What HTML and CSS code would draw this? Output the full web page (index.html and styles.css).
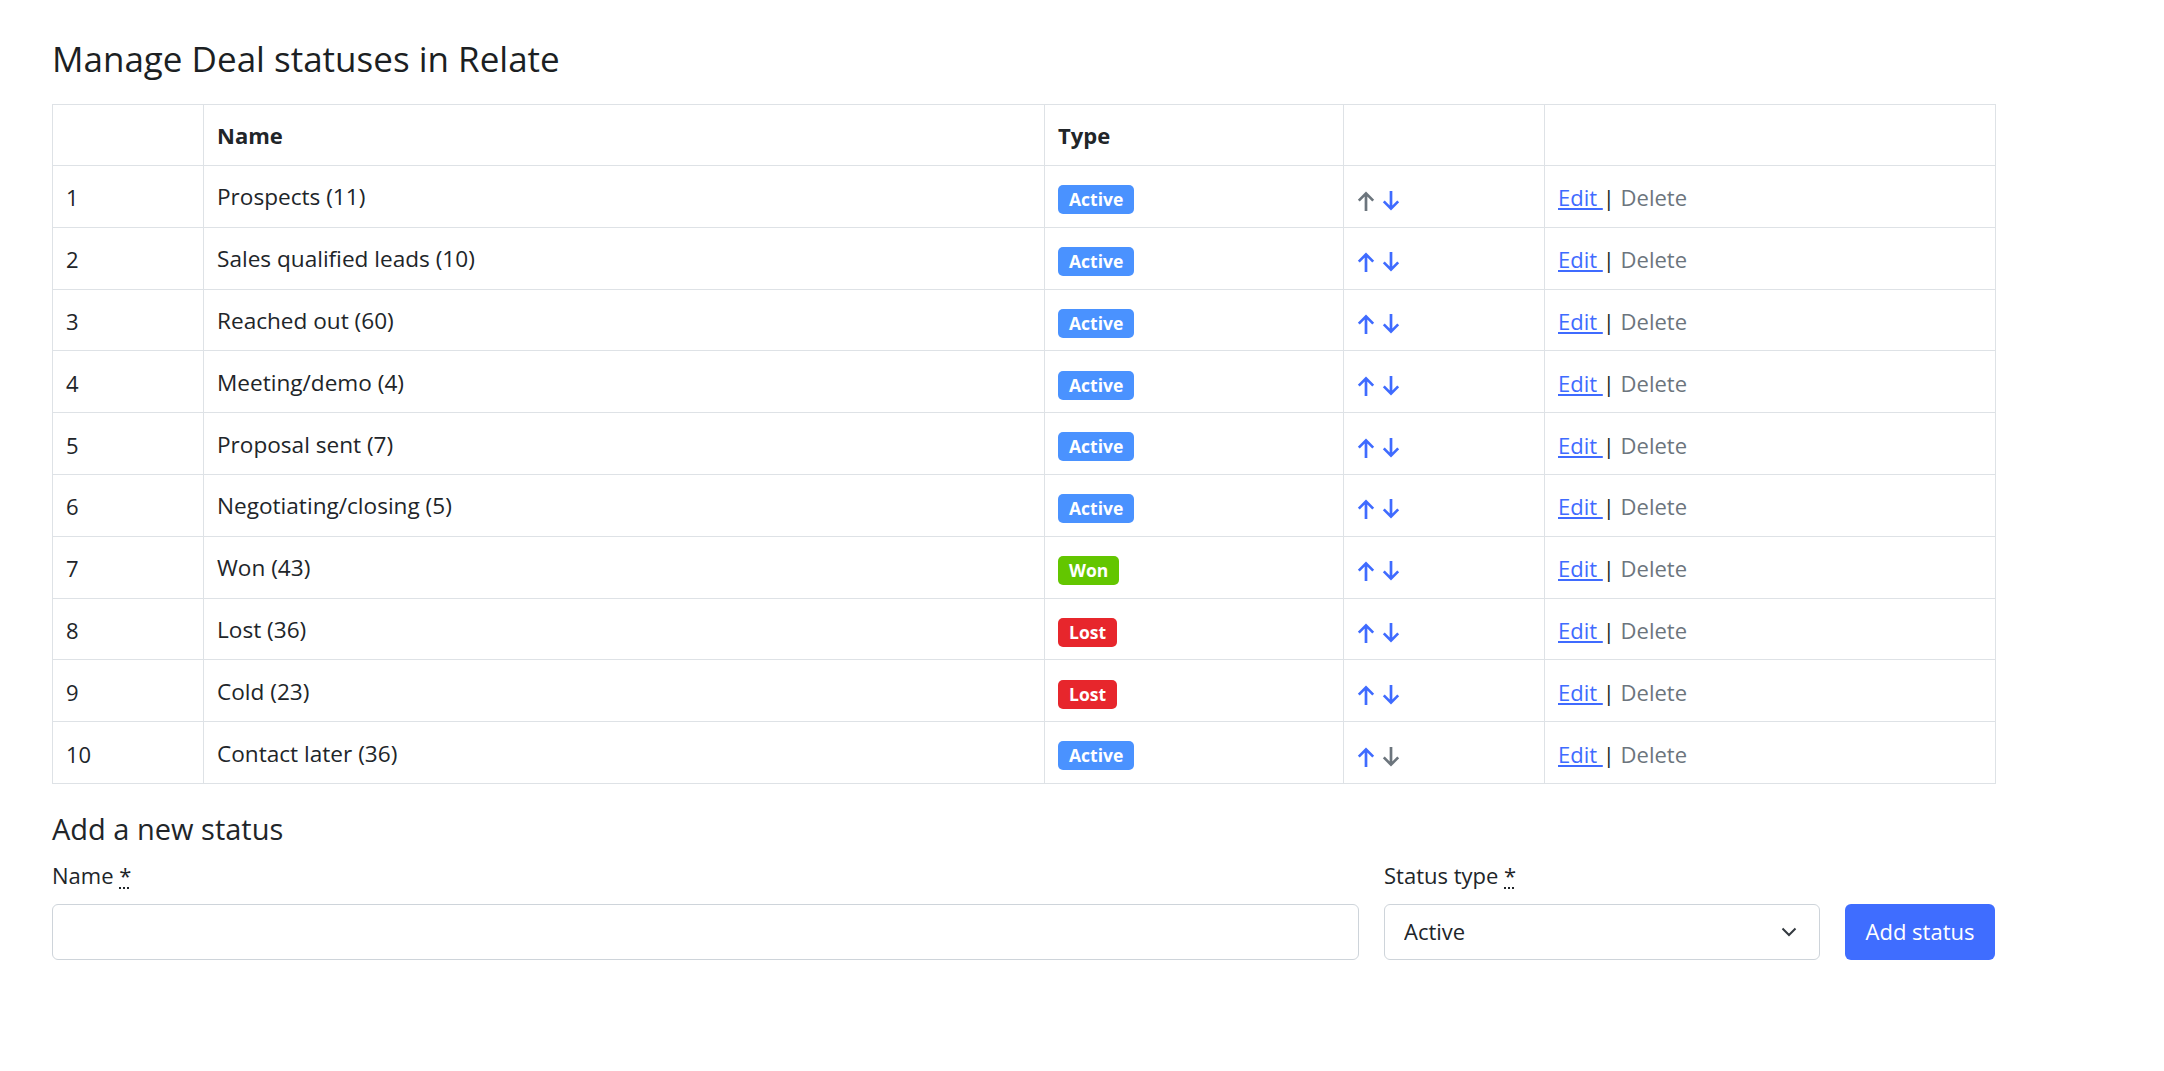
FILE: index.html
```html
<!DOCTYPE html>
<html lang="en">
<head>
<meta charset="utf-8">
<title>Manage Deal statuses in Relate</title>
<link rel="stylesheet" href="styles.css">
</head>
<body>
<main class="page">
  <h1 class="title">Manage Deal statuses in Relate</h1>
  <table class="statuses">
    <colgroup>
      <col class="c-num"><col class="c-name"><col class="c-type"><col class="c-move"><col class="c-act">
    </colgroup>
    <thead>
      <tr><th></th><th>Name</th><th>Type</th><th></th><th></th></tr>
    </thead>
    <tbody>
      <tr><td>1</td><td class="nm">Prospects (11)</td><td><span class="badge b-active">Active</span></td>
        <td><span class="moves"><svg class="arr off" viewBox="0 0 18 20"><path d="M9 20V2.6M1.8 9.6L9 2.4l7.2 7.2"/></svg><svg class="arr" viewBox="0 0 18 20"><path d="M9 0v17.4M1.8 10.4L9 17.6l7.2-7.2"/></svg></span></td>
        <td><a class="edit" href="#">Edit </a><span class="sep">|</span> <span class="del">Delete</span></td></tr>
      <tr><td>2</td><td class="nm">Sales qualified leads (10)</td><td><span class="badge b-active">Active</span></td>
        <td><span class="moves"><svg class="arr" viewBox="0 0 18 20"><path d="M9 20V2.6M1.8 9.6L9 2.4l7.2 7.2"/></svg><svg class="arr" viewBox="0 0 18 20"><path d="M9 0v17.4M1.8 10.4L9 17.6l7.2-7.2"/></svg></span></td>
        <td><a class="edit" href="#">Edit </a><span class="sep">|</span> <span class="del">Delete</span></td></tr>
      <tr><td>3</td><td class="nm">Reached out (60)</td><td><span class="badge b-active">Active</span></td>
        <td><span class="moves"><svg class="arr" viewBox="0 0 18 20"><path d="M9 20V2.6M1.8 9.6L9 2.4l7.2 7.2"/></svg><svg class="arr" viewBox="0 0 18 20"><path d="M9 0v17.4M1.8 10.4L9 17.6l7.2-7.2"/></svg></span></td>
        <td><a class="edit" href="#">Edit </a><span class="sep">|</span> <span class="del">Delete</span></td></tr>
      <tr><td>4</td><td class="nm">Meeting/demo (4)</td><td><span class="badge b-active">Active</span></td>
        <td><span class="moves"><svg class="arr" viewBox="0 0 18 20"><path d="M9 20V2.6M1.8 9.6L9 2.4l7.2 7.2"/></svg><svg class="arr" viewBox="0 0 18 20"><path d="M9 0v17.4M1.8 10.4L9 17.6l7.2-7.2"/></svg></span></td>
        <td><a class="edit" href="#">Edit </a><span class="sep">|</span> <span class="del">Delete</span></td></tr>
      <tr><td>5</td><td class="nm">Proposal sent (7)</td><td><span class="badge b-active">Active</span></td>
        <td><span class="moves"><svg class="arr" viewBox="0 0 18 20"><path d="M9 20V2.6M1.8 9.6L9 2.4l7.2 7.2"/></svg><svg class="arr" viewBox="0 0 18 20"><path d="M9 0v17.4M1.8 10.4L9 17.6l7.2-7.2"/></svg></span></td>
        <td><a class="edit" href="#">Edit </a><span class="sep">|</span> <span class="del">Delete</span></td></tr>
      <tr><td>6</td><td class="nm">Negotiating/closing (5)</td><td><span class="badge b-active">Active</span></td>
        <td><span class="moves"><svg class="arr" viewBox="0 0 18 20"><path d="M9 20V2.6M1.8 9.6L9 2.4l7.2 7.2"/></svg><svg class="arr" viewBox="0 0 18 20"><path d="M9 0v17.4M1.8 10.4L9 17.6l7.2-7.2"/></svg></span></td>
        <td><a class="edit" href="#">Edit </a><span class="sep">|</span> <span class="del">Delete</span></td></tr>
      <tr><td>7</td><td class="nm">Won (43)</td><td><span class="badge b-won">Won</span></td>
        <td><span class="moves"><svg class="arr" viewBox="0 0 18 20"><path d="M9 20V2.6M1.8 9.6L9 2.4l7.2 7.2"/></svg><svg class="arr" viewBox="0 0 18 20"><path d="M9 0v17.4M1.8 10.4L9 17.6l7.2-7.2"/></svg></span></td>
        <td><a class="edit" href="#">Edit </a><span class="sep">|</span> <span class="del">Delete</span></td></tr>
      <tr><td>8</td><td class="nm">Lost (36)</td><td><span class="badge b-lost">Lost</span></td>
        <td><span class="moves"><svg class="arr" viewBox="0 0 18 20"><path d="M9 20V2.6M1.8 9.6L9 2.4l7.2 7.2"/></svg><svg class="arr" viewBox="0 0 18 20"><path d="M9 0v17.4M1.8 10.4L9 17.6l7.2-7.2"/></svg></span></td>
        <td><a class="edit" href="#">Edit </a><span class="sep">|</span> <span class="del">Delete</span></td></tr>
      <tr><td>9</td><td class="nm">Cold (23)</td><td><span class="badge b-lost">Lost</span></td>
        <td><span class="moves"><svg class="arr" viewBox="0 0 18 20"><path d="M9 20V2.6M1.8 9.6L9 2.4l7.2 7.2"/></svg><svg class="arr" viewBox="0 0 18 20"><path d="M9 0v17.4M1.8 10.4L9 17.6l7.2-7.2"/></svg></span></td>
        <td><a class="edit" href="#">Edit </a><span class="sep">|</span> <span class="del">Delete</span></td></tr>
      <tr><td>10</td><td class="nm">Contact later (36)</td><td><span class="badge b-active">Active</span></td>
        <td><span class="moves"><svg class="arr" viewBox="0 0 18 20"><path d="M9 20V2.6M1.8 9.6L9 2.4l7.2 7.2"/></svg><svg class="arr off" viewBox="0 0 18 20"><path d="M9 0v17.4M1.8 10.4L9 17.6l7.2-7.2"/></svg></span></td>
        <td><a class="edit" href="#">Edit </a><span class="sep">|</span> <span class="del">Delete</span></td></tr>
    </tbody>
  </table>

  <h2 class="subtitle">Add a new status</h2>
  <form class="add-form">
    <div class="field field-name">
      <label class="label" for="st-name">Name <abbr title="required">*</abbr></label>
      <input class="control" id="st-name" type="text">
    </div>
    <div class="field field-type">
      <label class="label" for="st-type">Status type <abbr title="required">*</abbr></label>
      <div class="select-wrap">
        <select class="control select" id="st-type">
          <option>Active</option>
          <option>Won</option>
          <option>Lost</option>
        </select>
        <svg class="chev" viewBox="0 0 16 10"><path d="M1.5 1.5L8 8l6.5-6.5"/></svg>
      </div>
    </div>
    <div class="field field-btn">
      <button class="btn" type="button">Add status</button>
    </div>
  </form>
</main>
</body>
</html>
```

FILE: styles.css
```css
* { box-sizing: border-box; }

body {
  margin: 0;
  background: #fff;
  color: #212529;
  font-family: "Open Sans", "Noto Sans", sans-serif;
  font-size: 22px;
  line-height: 1.5;
}

.page {
  width: 1943px;
  margin-left: 52px;
  padding-top: 38px;
}

.title {
  margin: 0 0 24px;
  font-size: 35px;
  font-weight: 500;
  line-height: 42px;
  color: #1c1f23;
}

.statuses {
  width: 1943px;
  border-collapse: collapse;
  table-layout: fixed;
  border: 1px solid #dee2e6;
}

.c-num { width: 151px; }
.c-name { width: 841px; }
.c-type { width: 299px; }
.c-move { width: 201px; }
.c-act { width: 451px; }

.statuses th,
.statuses td {
  border: 1px solid #dee2e6;
  padding: 0 13px;
  text-align: left;
  vertical-align: middle;
  line-height: 32px;
}

.statuses th {
  height: 61px;
  font-weight: 700;
}

.statuses td {
  height: 61.8px;
  padding-top: 2px;
}

.statuses .nm { font-size: 22.6px; }

.badge {
  display: inline-block;
  vertical-align: middle;
  padding: 0 11px;
  height: 29px;
  line-height: 29px;
  border-radius: 5px;
  color: #fff;
  font-size: 17.5px;
  font-weight: 700;
}

.b-active { background: #4a92ff; }
.b-won { background: #63c600; }
.b-lost { background: #e7262c; }

.moves {
  display: inline-flex;
  gap: 7px;
  vertical-align: middle;
}

.arr {
  width: 18px;
  height: 20px;
  fill: none;
  stroke: #3f6bff;
  stroke-width: 2.7;
}

.arr.off { stroke: #6c757d; }

.edit {
  color: #3f6bff;
  text-decoration: underline;
}

.sep { color: #212529; }
.del { color: #6c757d; }

.subtitle {
  margin: 27px 0 0;
  font-size: 29px;
  font-weight: 500;
  line-height: 35px;
}

.add-form {
  display: flex;
  align-items: flex-end;
  gap: 25px;
  margin-top: 13px;
}

.field { display: flex; flex-direction: column; }
.field-name { flex: 1; }
.field-type { width: 436px; }

.label {
  margin-bottom: 12px;
  font-size: 22px;
  line-height: 33px;
}

.label abbr {
  text-decoration: underline dotted;
  text-underline-offset: 3px;
  cursor: help;
}

.control {
  height: 56px;
  width: 100%;
  border: 1px solid #ced4da;
  border-radius: 6px;
  background: #fff;
  color: #212529;
  font: inherit;
  padding: 0 19px;
}

.select-wrap { position: relative; }

.select {
  appearance: none;
  -webkit-appearance: none;
}

.chev {
  position: absolute;
  right: 23px;
  top: 23px;
  width: 16px;
  height: 10px;
  fill: none;
  stroke: #343a40;
  stroke-width: 2;
  pointer-events: none;
}

.btn {
  height: 56px;
  width: 150px;
  border: 0;
  border-radius: 6px;
  background: #3f6dff;
  color: #fff;
  font: inherit;
  cursor: pointer;
}
```
